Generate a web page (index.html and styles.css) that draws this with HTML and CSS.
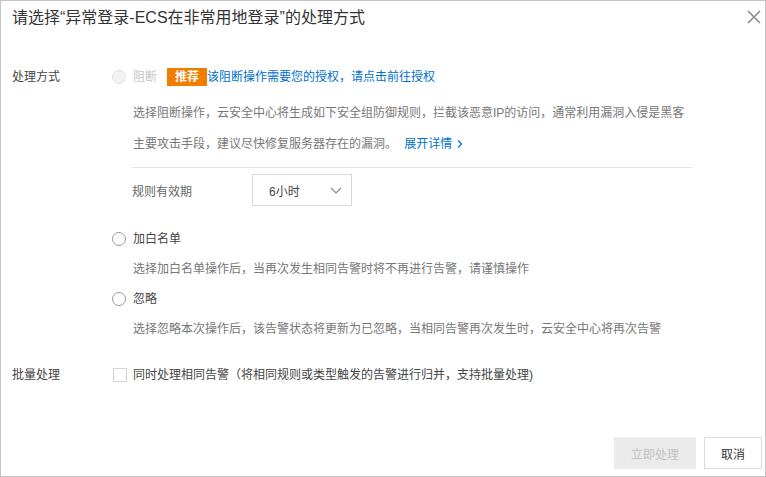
FILE: index.html
```html
<!DOCTYPE html>
<html lang="zh-CN">
<head>
<meta charset="utf-8">
<title>处理方式</title>
<link rel="stylesheet" href="styles.css">
</head>
<body>
<div class="dialog">
  <div class="header">
    <div class="title">请选择“异常登录-ECS在非常用地登录”的处理方式</div>
    <svg class="close" width="14" height="14" viewBox="0 0 14 14"><path d="M1 1L13 13M13 1L1 13" stroke="#8a8a8a" stroke-width="1.6" fill="none"/></svg>
  </div>
  <div class="form">
    <div class="label l1">处理方式</div>
    <div class="content">
      <div class="opt">
        <span class="radio disabled"></span><span class="opt-text muted">阻断</span>
        <span class="badge">推荐</span><a class="link">该阻断操作需要您的授权，请点击前往授权</a>
      </div>
      <div class="desc two">
        <p>选择阻断操作，云安全中心将生成如下安全组防御规则，拦截该恶意IP的访问，通常利用漏洞入侵是黑客</p>
        <p>主要攻击手段，建议尽快修复服务器存在的漏洞。 <a class="link more">展开详情<svg width="8" height="10" viewBox="0 0 8 10"><path d="M2 1.5L5.5 5L2 8.5" stroke="#0070cc" stroke-width="1.3" fill="none"/></svg></a></p>
      </div>
      <div class="divider"></div>
      <div class="rule">
        <span class="rule-label">规则有效期</span>
        <div class="select"><span>6小时</span><svg width="12" height="7" viewBox="0 0 12 7"><path d="M1 1L6 6L11 1" stroke="#8c8c8c" stroke-width="1.2" fill="none"/></svg></div>
      </div>
      <div class="opt gap-a">
        <span class="radio"></span><span class="opt-text">加白名单</span>
      </div>
      <div class="desc one">选择加白名单操作后，当再次发生相同告警时将不再进行告警，请谨慎操作</div>
      <div class="opt gap-b">
        <span class="radio"></span><span class="opt-text">忽略</span>
      </div>
      <div class="desc one">选择忽略本次操作后，该告警状态将更新为已忽略，当相同告警再次发生时，云安全中心将再次告警</div>
    </div>
    <div class="label l2">批量处理</div>
    <div class="content batch">
      <div class="opt">
        <span class="checkbox"></span><span class="opt-text">同时处理相同告警（将相同规则或类型触发的告警进行归并，支持批量处理)</span>
      </div>
    </div>
  </div>
  <div class="footer">
    <button class="btn primary-disabled">立即处理</button>
    <button class="btn">取消</button>
  </div>
</div>
</body>
</html>
```

FILE: styles.css
```css
* { box-sizing: border-box; }
html, body { margin: 0; padding: 0; background: #fff; }
body {
  font-family: "Liberation Sans", "Noto Sans CJK SC", sans-serif;
  color: #444;
  font-size: 12px;
}
.dialog {
  width: 766px;
  height: 477px;
  border: 1px solid #c4c4c4;
  display: flex;
  flex-direction: column;
  background: #fff;
}
.header {
  height: 34px;
  display: flex;
  align-items: center;
  justify-content: space-between;
  padding: 0 4px 0 11px;
}
.title {
  font-size: 16px;
  line-height: 34px;
  color: #333;
}
.close { margin-top: -2px; }
.form {
  display: grid;
  grid-template-columns: 100px 1fr;
  padding-left: 11px;
  margin-top: 33px;
}
.label {
  line-height: 18px;
  color: #444;
}
.content { display: flex; flex-direction: column; }
.opt {
  display: flex;
  align-items: center;
  height: 18px;
  line-height: 18px;
}
.radio {
  width: 14px;
  height: 14px;
  border: 1px solid #9a9a9a;
  border-radius: 50%;
  margin-right: 7px;
  background: #fff;
}
.radio.disabled {
  border-color: #e2e2e2;
  background: #f3f3f3;
}
.opt-text { color: #444; }
.muted { color: #c4c4c4; }
.badge {
  margin-left: 10px;
  width: 40px;
  height: 18px;
  background: #f07c00;
  color: #fff;
  font-weight: bold;
  font-size: 12px;
  text-align: center;
  line-height: 18px;
}
.link { color: #0070cc; text-decoration: none; }
.desc {
  padding-left: 21px;
  color: #777;
}
.desc p { margin: 0; }
.desc.two { padding-top: 12px; line-height: 31px; }
.desc.one { margin-top: 12px; line-height: 18px; }
.more { margin-left: 4px; }
.more svg { margin-left: 4px; vertical-align: -1px; }
.divider {
  margin-top: 7px;
  margin-left: 20px;
  width: 560px;
  height: 1px;
  background: #e6e6e6;
}
.rule {
  margin-top: 6px;
  margin-left: 20px;
  display: flex;
  align-items: center;
}
.rule-label { width: 120px; color: #666; }
.select {
  width: 100px;
  height: 32px;
  border: 1px solid #d9d9d9;
  display: flex;
  align-items: center;
  justify-content: space-between;
  padding: 0 9px 0 16px;
  color: #444;
}
.gap-a { margin-top: 24px; }
.gap-b { margin-top: 12px; }
.l2 { margin-top: 28px; }
.batch { margin-top: 28px; }
.checkbox {
  width: 14px;
  height: 14px;
  border: 1px solid #d4d4d4;
  margin-left: 1px;
  margin-right: 6px;
  background: #fff;
}
.footer {
  margin-top: auto;
  display: flex;
  justify-content: flex-end;
  gap: 8px;
  padding: 0 3px 7px 0;
}
.btn {
  height: 32px;
  font-family: inherit;
  font-size: 12px;
  border: 1px solid #dcdcdc;
  background: #fff;
  color: #333;
  padding: 0;
  width: 58px;
}
.primary-disabled {
  width: 82px;
  background: #ebebeb;
  border-color: #ebebeb;
  color: #c2c2c2;
}
```
